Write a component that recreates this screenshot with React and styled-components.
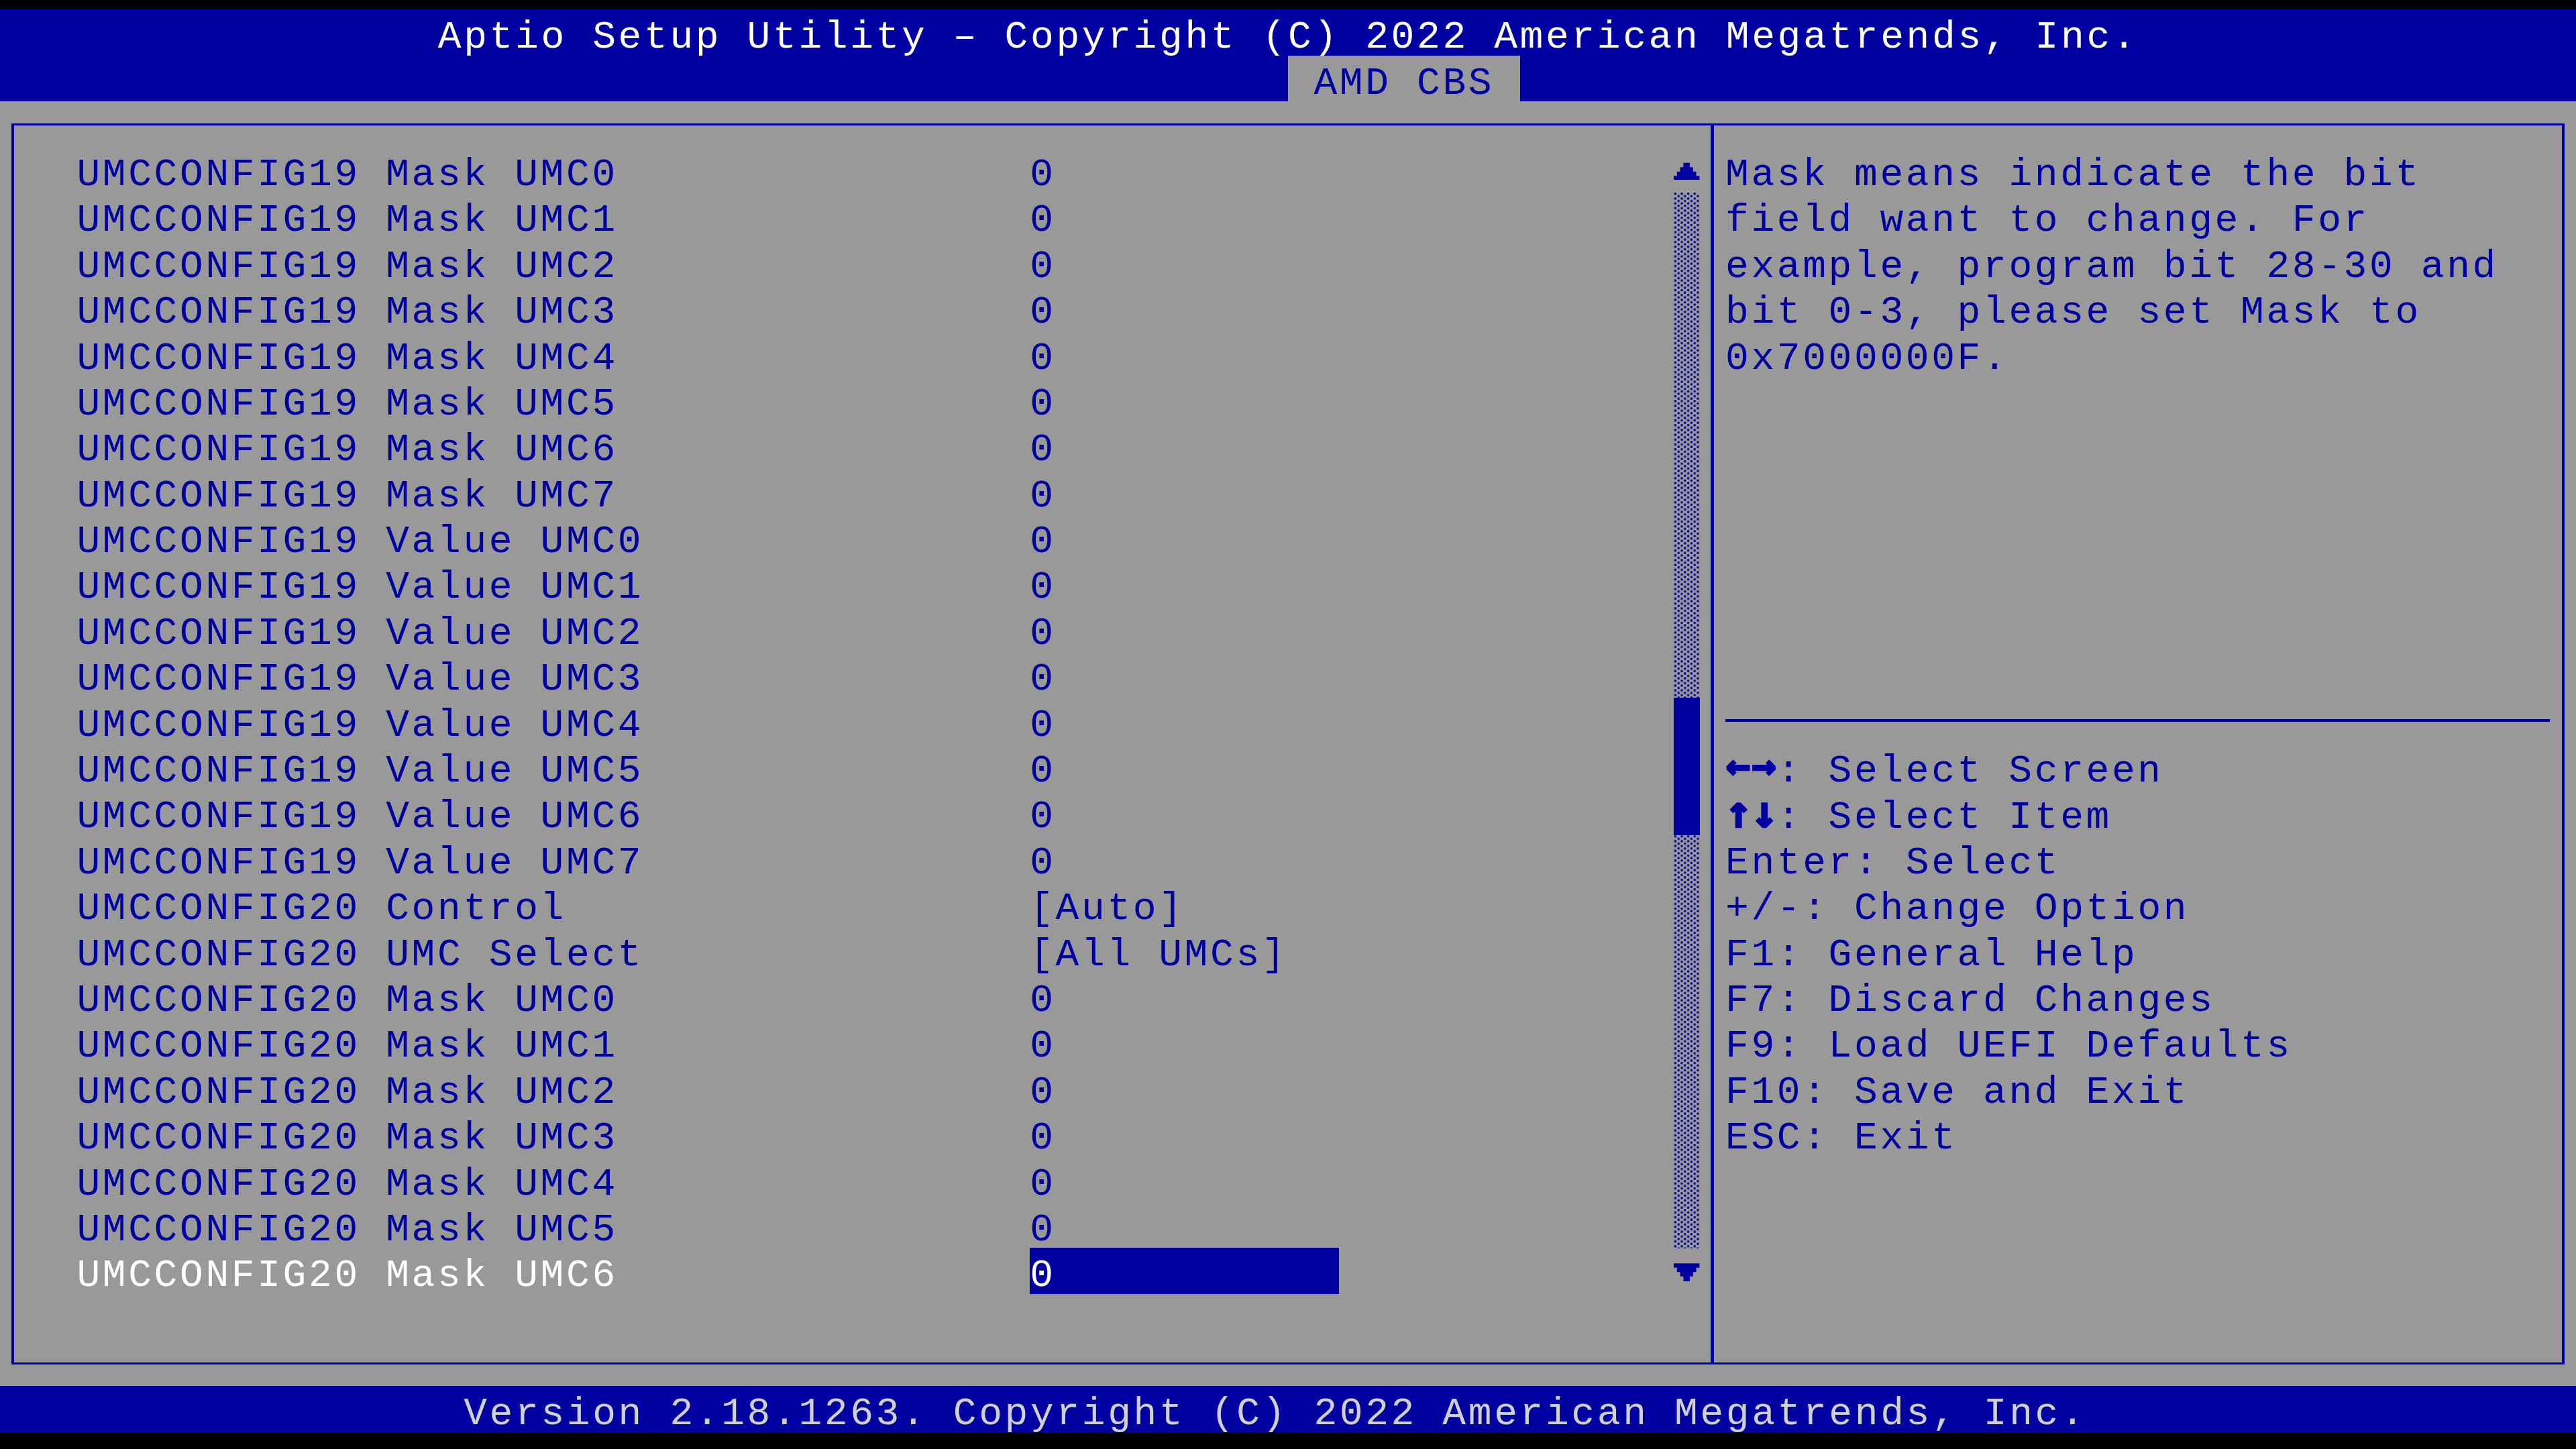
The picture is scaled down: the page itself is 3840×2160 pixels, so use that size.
import React from "react";
import styled, { createGlobalStyle, css } from "styled-components";

// text-mode grid: 100 columns x 31 rows
const CW = 38.4;
const RH = 68.4;
const px = (v) => `${+v.toFixed(3)}px`;

const BLUE = "#0000a0";
const GRAY = "#999999";

const GlobalStyle = createGlobalStyle`
  html, body {
    margin: 0;
    padding: 0;
    background: #000;
  }
`;

const cell = css`
  height: ${px(RH)};
  box-sizing: border-box;
  padding-top: 16px;
  line-height: 52.4px;
  font-family: "Liberation Mono", "DejaVu Sans Mono", monospace;
  font-size: 58px;
  letter-spacing: 3.594px;
  white-space: pre;
`;

const Screen = styled.div`
  width: 3840px;
  height: 2160px;
  box-sizing: border-box;
  padding-top: 14.4px;
  background: #000;
  display: flex;
  flex-direction: column;
  overflow: hidden;
`;

const TitleBar = styled.div`
  ${cell};
  background: ${BLUE};
  color: #ffffff;
  padding-left: ${px(17 * CW)};
`;

const TabBar = styled.div`
  height: ${px(RH)};
  background: ${BLUE};
  display: flex;
  padding-left: ${px(50 * CW)};
`;

const Tab = styled.div`
  ${cell};
  background: ${GRAY};
  color: ${BLUE};
  padding-left: ${px(CW)};
  padding-right: ${px(CW)};
`;

const Workspace = styled.div`
  height: ${px(28 * RH)};
  box-sizing: border-box;
  background: ${GRAY};
  padding: 32.4px 16.8px 0;
`;

const Frame = styled.div`
  height: 1850.4px;
  box-sizing: border-box;
  border-style: solid;
  border-color: ${BLUE};
  border-width: 3.6px 4.8px;
  display: flex;
`;

const ListPanel = styled.div`
  flex: none;
  width: 2529.6px;
  box-sizing: border-box;
  padding: 32.4px 16.8px 0 93.6px;
  display: flex;
  justify-content: space-between;
`;

const ItemList = styled.div`
  width: ${px(49 * CW)};
  display: flex;
  flex-direction: column;
`;

const ItemRow = styled.div`
  display: grid;
  grid-template-columns: ${px(37 * CW)} ${px(12 * CW)};
`;

const ItemLabel = styled.div`
  ${cell};
  color: ${(p) => (p.$selected ? "#ffffff" : BLUE)};
`;

const ItemValue = styled.div`
  ${cell};
  color: ${(p) => (p.$active ? "#ffffff" : BLUE)};
  background: ${(p) => (p.$active ? BLUE : "transparent")};
`;

const ScrollBar = styled.div`
  width: ${px(CW)};
  display: flex;
  flex-direction: column;
`;

const ScrollArrow = styled.svg`
  display: block;
  width: ${px(CW)};
  height: ${px(RH)};
  fill: ${BLUE};
`;

const Track = styled.div`
  height: ${(p) => px(p.$rows * RH)};
  background-image: radial-gradient(
      circle at 2.4px 1.8px,
      ${BLUE} 1.4px,
      transparent 2.1px
    ),
    radial-gradient(circle at 7.2px 5.4px, ${BLUE} 1.4px, transparent 2.1px);
  background-size: 9.6px 7.2px;
`;

const Thumb = styled.div`
  height: ${(p) => px(p.$rows * RH)};
  background: ${BLUE};
`;

const Divider = styled.div`
  flex: none;
  width: 4.8px;
  background: ${BLUE};
`;

const HelpPanel = styled.div`
  flex: 1;
  padding: 32.4px 0 0 16.8px;
  display: flex;
  flex-direction: column;
`;

const Description = styled.div`
  height: ${px(12 * RH)};
`;

const HelpLine = styled.div`
  ${cell};
  color: ${BLUE};
`;

const Separator = styled.div`
  height: ${px(RH)};
  display: flex;
  align-items: center;
`;

const Rule = styled.div`
  width: ${px(32 * CW)};
  height: 3.6px;
  background: ${BLUE};
`;

// heavy arrow keys of the key legend; zero line-height keeps the row baseline put
const Glyph = styled.span`
  display: inline-block;
  width: ${px(CW)};
  line-height: 0;
  text-align: center;
  letter-spacing: 0;
  font-family: "DejaVu Sans Mono", monospace;
  font-weight: bold;
  font-size: ${(p) => (p.$vertical ? "66px" : "60px")};
  -webkit-text-stroke: 2.6px currentColor;
  vertical-align: ${(p) => (p.$vertical ? "1px" : "4px")};
`;

const Footer = styled.div`
  ${cell};
  background: ${BLUE};
  color: #d0d0d0;
  padding-left: ${px(18 * CW)};
`;

const range = (n) => Array.from({ length: n }, (_, i) => i);

const items = [
  ...range(8).map((i) => ({ label: `UMCCONFIG19 Mask UMC${i}`, value: "0" })),
  ...range(8).map((i) => ({ label: `UMCCONFIG19 Value UMC${i}`, value: "0" })),
  { label: "UMCCONFIG20 Control", value: "[Auto]" },
  { label: "UMCCONFIG20 UMC Select", value: "[All UMCs]" },
  ...range(7).map((i) => ({ label: `UMCCONFIG20 Mask UMC${i}`, value: "0" })),
];

const selected = items.length - 1;

const description = [
  "Mask means indicate the bit",
  "field want to change. For",
  "example, program bit 28-30 and",
  "bit 0-3, please set Mask to",
  "0x7000000F.",
];

const keys = [
  { glyphs: ["\u2190", "\u2192"], text: ": Select Screen" },
  { glyphs: ["\u2191", "\u2193"], vertical: true, text: ": Select Item" },
  { text: "Enter: Select" },
  { text: "+/-: Change Option" },
  { text: "F1: General Help" },
  { text: "F7: Discard Changes" },
  { text: "F9: Load UEFI Defaults" },
  { text: "F10: Save and Exit" },
  { text: "ESC: Exit" },
];

// stepped triangles in the 8x19 character cell
const UpArrow = () => (
  <ScrollArrow viewBox="0 0 8 19" preserveAspectRatio="none">
    <path d="M3 6.6H5V8.4H6V10.2H7V12H8V13.6H0V12H1V10.2H2V8.4H3Z" />
  </ScrollArrow>
);

const DownArrow = () => (
  <ScrollArrow viewBox="0 0 8 19" preserveAspectRatio="none">
    <path d="M0 6.2H8V8H7V9.8H6V11.6H5V13.6H3V11.6H2V9.8H1V8H0Z" />
  </ScrollArrow>
);

const App = () => {
  return (
    <>
      <GlobalStyle />
      <Screen>
        <TitleBar>
          Aptio Setup Utility – Copyright (C) 2022 American Megatrends, Inc.
        </TitleBar>
        <TabBar>
          <Tab>AMD CBS</Tab>
        </TabBar>
        <Workspace>
          <Frame>
            <ListPanel>
              <ItemList>
                {items.map((item, i) => (
                  <ItemRow key={i}>
                    <ItemLabel $selected={i === selected}>{item.label}</ItemLabel>
                    <ItemValue $active={i === selected}>{item.value}</ItemValue>
                  </ItemRow>
                ))}
              </ItemList>
              <ScrollBar>
                <UpArrow />
                <Track $rows={11} />
                <Thumb $rows={3} />
                <Track $rows={9} />
                <DownArrow />
              </ScrollBar>
            </ListPanel>
            <Divider />
            <HelpPanel>
              <Description>
                {description.map((line) => (
                  <HelpLine key={line}>{line}</HelpLine>
                ))}
              </Description>
              <Separator>
                <Rule />
              </Separator>
              {keys.map((k) => (
                <HelpLine key={k.text}>
                  {k.glyphs &&
                    k.glyphs.map((g) => (
                      <Glyph key={g} $vertical={k.vertical}>
                        {g}
                      </Glyph>
                    ))}
                  {k.text}
                </HelpLine>
              ))}
            </HelpPanel>
          </Frame>
        </Workspace>
        <Footer>
          Version 2.18.1263. Copyright (C) 2022 American Megatrends, Inc.
        </Footer>
      </Screen>
    </>
  );
};

export default App;
